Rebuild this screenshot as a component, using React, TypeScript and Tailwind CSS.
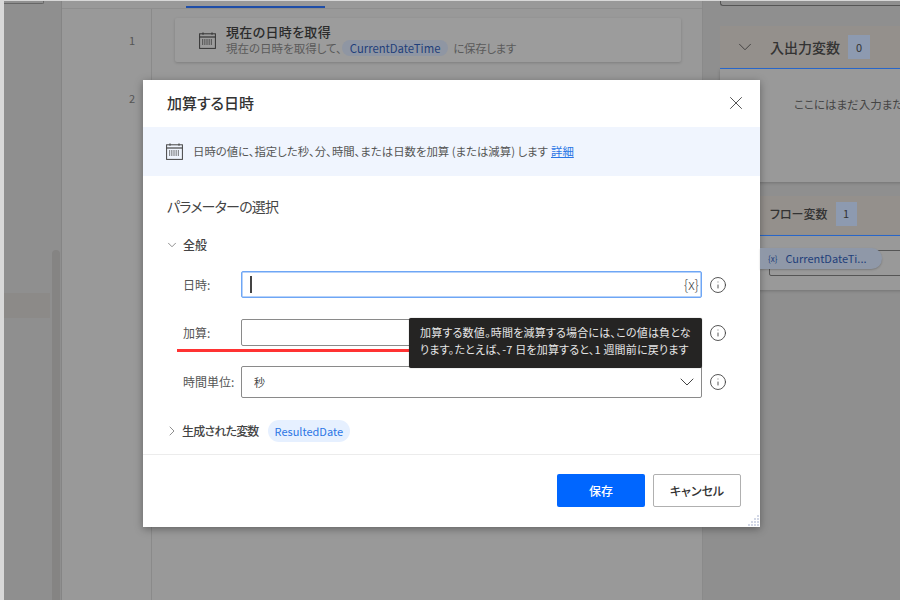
import { ChevronDown, ChevronRight, Info, X } from "lucide-react";

const FONT = "font-['Noto_Sans_CJK_JP','Noto_Sans',sans-serif] [font-feature-settings:'palt']";

function CalendarIcon({ className }: { className?: string }) {
  const dots = [];
  for (let row = 0; row < 3; row++) {
    for (let col = 0; col < 5; col++) {
      dots.push(<rect key={`${row}-${col}`} x={3 + col * 2.2} y={7.4 + row * 2} width="1.2" height="1.2" />);
    }
  }
  return (
    <svg viewBox="0 0 17 17" className={className} fill="none">
      <rect x="0.6" y="1.8" width="15.8" height="14.6" stroke="currentColor" strokeWidth="1" />
      <path d="M0.6 5h15.8" stroke="currentColor" strokeWidth="1.2" />
      <path d="M4 0.4v2.4M13 0.4v2.4" stroke="currentColor" strokeWidth="1" />
      <g fill="currentColor">{dots}</g>
    </svg>
  );
}

function ResizeGrip() {
  const cells = [
    [10, 0], [10, 3], [7, 3], [10, 6], [7, 6], [4, 6], [10, 9], [7, 9], [4, 9], [1, 9],
  ];
  return (
    <svg viewBox="0 0 12 11" className="absolute right-[1px] bottom-[1px] h-[11px] w-[12px]">
      {cells.map(([x, y]) => (
        <rect key={`${x}-${y}`} x={x} y={y} width="2" height="2" fill="#d3d8e6" />
      ))}
    </svg>
  );
}

function InfoButton({ className = "" }: { className?: string }) {
  return (
    <span className={`ml-[7px] flex w-[18px] shrink-0 justify-center text-[#444] ${className}`}>
      <Info size={18} strokeWidth={1.2} />
    </span>
  );
}

function FieldLabel({ children }: { children: string }) {
  return <span className="w-[98px] shrink-0 pl-[40px] text-[12px] text-[#555]">{children}</span>;
}

function LeftPanel() {
  return (
    <div className="flex w-[58px] shrink-0 flex-col border-r border-[#858585] bg-[#8f8f8f]">
      <div className="h-[3px] w-[40px] rounded-br-[2px] border-r border-b border-[#666]" />
      <div className="mt-[289px] flex grow">
        <div className="h-[25px] w-[46px] bg-[#8c8a88]" />
        <div className="-mt-[43px] ml-[2px] w-[8px] rounded-t-[4px] bg-[#858483]" />
      </div>
    </div>
  );
}

function CenterPanel() {
  return (
    <div className="flex w-[641px] shrink-0 flex-col border-r border-[#8a8a8a] bg-[#999]">
      <div className="h-[8px] border-b border-[#8e8e8e] bg-[#999] pl-[124px]">
        <div className="mt-[5px] h-[2px] w-[139px] bg-[#1f4ea8]" />
      </div>
      <div className="flex grow">
        <div className="w-[90px] shrink-0 border-r border-[#8a8a8a] text-right text-[11px] text-[#555]">
          <div className="mt-[23px] pr-[16px]">1</div>
          <div className="mt-[41px] pr-[16px]">2</div>
        </div>
        <div className="grow pl-[23px]">
          <div className="mt-[9px] flex h-[44px] w-[506px] items-center rounded-[2px] bg-[#9c9c9c] pl-[24px] shadow-[0_1px_3px_rgba(0,0,0,0.18)]">
            <CalendarIcon className="h-[17px] w-[17px] text-[#333]" />
            <div className="ml-[10px] -mt-[2px]">
              <div className="text-[13px] leading-[17px] font-medium tracking-[0.3px] text-[#2b2b2b]">現在の日時を取得</div>
              <div className="flex items-center text-[11.5px] leading-[16px] text-[#5a5a5a]">
                現在の日時を取得して、
                <span className="rounded-full bg-[#8f96a3] px-[8px] text-[11.3px] text-[#1f3f7a]">CurrentDateTime</span>
                <span className="ml-[5px] tracking-[-0.4px]">に保存します</span>
              </div>
            </div>
          </div>
        </div>
      </div>
    </div>
  );
}

function RightPanel() {
  return (
    <div className="grow bg-[#8f8f8f] pl-[17px]">
      <div className="h-[5px] rounded-bl-[3px] border-b border-l border-[#555]" />
      <div className="mt-[20px] flex h-[43px] items-center border-b border-[#2a6ad0] bg-[#94908c] pl-[14px] text-[#333]">
        <ChevronDown size={22} strokeWidth={0.9} />
        <span className="ml-[14px] text-[14px] font-medium">入出力変数</span>
        <span className="ml-[8px] flex h-[24px] w-[22px] items-center justify-center bg-[#8d9ab0] text-[11px]">0</span>
      </div>
      <div className="h-[113px] bg-[#999] pt-[27px] pl-[74px] text-[11.5px] whitespace-nowrap text-[#444] shadow-[0_1px_3px_rgba(0,0,0,0.2)]">
        ここにはまだ入力または
      </div>
      <div className="mt-[14px] flex h-[40px] items-center border-b border-[#2a6ad0] bg-[#94908c] pb-[4px] pl-[50px] text-[#333]">
        <span className="text-[12px] font-medium">フロー変数</span>
        <span className="ml-[8px] flex h-[24px] w-[21px] items-center justify-center bg-[#8d9ab0] text-[11px]">1</span>
      </div>
      <div className="h-[54px] bg-[#999] pt-[14px] pr-[1px] pl-[49px] shadow-[0_1px_3px_rgba(0,0,0,0.2)]">
        <div className="h-[26px] rounded-[2px] border border-[#555] bg-[#999]" />
      </div>
    </div>
  );
}

function Dialog() {
  return (
    <div className="absolute top-[80px] left-[143px] h-[447px] w-[617px] bg-white text-[#333] shadow-[0_2px_8px_rgba(0,0,0,0.35)]">
      <div className="flex h-[47px] items-center justify-between pr-[13px] pl-[24px]">
        <span className="text-[15px] font-medium">加算する日時</span>
        <X size={22} strokeWidth={1} className="-mt-[2px] text-[#444]" />
      </div>
      <div className="flex h-[49px] items-center bg-[#f0f5fe] pl-[23px] text-[11.4px] text-[#555]">
        <CalendarIcon className="h-[17px] w-[17px] text-[#444]" />
        <span className="ml-[10px]">日時の値に、指定した秒、分、時間、または日数を加算 (または減算) します</span>
        <span className="ml-[3px] text-[#2b76e5] underline">詳細</span>
      </div>
      <div className="mt-[20px] pl-[24px] text-[14px] leading-[20px] tracking-[-0.8px] text-[#444]">パラメーターの選択</div>
      <div className="mt-[20px] flex items-center pl-[22px]">
        <ChevronDown size={14} strokeWidth={1.25} className="text-[#666]" />
        <span className="ml-[4px] text-[12px] font-medium text-[#444]">全般</span>
      </div>
      <div className="mt-[17px] flex h-[27px] items-center">
        <FieldLabel>日時:</FieldLabel>
        <div className="flex h-full w-[461px] items-center justify-between rounded-[2px] border border-[#6ea6f5] pr-[2px] pl-[8px] shadow-[inset_0_0_0_0.5px_#6ea6f5]">
          <span className="h-[17px] w-[1.5px] bg-[#444]" />
          <span className="text-[14px] font-light text-[#444]">{"{x}"}</span>
        </div>
        <InfoButton className="mt-[1px]" />
      </div>
      <div className="relative mt-[21px] flex h-[27px] items-center">
        <FieldLabel>加算:</FieldLabel>
        <div className="h-full w-[461px] rounded-[2px] border border-[#8a8a8a]" />
        <InfoButton className="mt-[1px]" />
        <div className="absolute top-[30px] left-[34px] h-[3px] w-[232px] bg-[#ff3333]" />
        <div className="absolute top-[-1px] left-[266px] h-[50px] w-[293px] rounded-[2px] bg-[#252423] pt-[6px] pl-[11px] text-[11px] leading-[17px] tracking-[0.2px] whitespace-nowrap text-[#e6e6e6] shadow-[0_0_1px_rgba(0,0,0,0.6)]">
          <div>加算する数値。時間を減算する場合には、この値は負とな</div>
          <div>ります。たとえば、-7 日を加算すると、1 週間前に戻ります</div>
        </div>
      </div>
      <div className="mt-[20px] flex h-[32px] items-center">
        <FieldLabel>時間単位:</FieldLabel>
        <div className="flex h-full w-[461px] items-center justify-between rounded-[2px] border border-[#8a8a8a] pr-[2px] pl-[12px]">
          <span className="text-[11px] text-[#444]">秒</span>
          <ChevronDown size={24} strokeWidth={1} className="text-[#444]" />
        </div>
        <InfoButton className="-mt-[1px]" />
      </div>
      <div className="mt-[22px] flex items-center pl-[21px]">
        <ChevronRight size={16} strokeWidth={1.1} className="text-[#666]" />
        <span className="ml-[2px] text-[12px] font-medium tracking-[-0.8px] text-[#444]">生成された変数</span>
        <span className="ml-[9px] flex h-[22px] items-center rounded-full bg-[#e6f0ff] px-[7px] text-[11px] text-[#2b76e5]">
          ResultedDate
        </span>
      </div>
      <div className="mt-[12px] border-t border-[#ececec]" />
      <div className="mt-[19px] flex justify-end gap-[8px] pr-[19px]">
        <button className="h-[33px] w-[88px] rounded-[2px] bg-[#0066ff] text-[12px] font-medium text-white">保存</button>
        <button className="h-[33px] w-[88px] rounded-[2px] border-[1.5px] border-[#b0b0b0] bg-white text-[12px] font-medium text-[#333]">
          キャンセル
        </button>
      </div>
      <ResizeGrip />
    </div>
  );
}

export default function App() {
  return (
    <div className={`relative h-[600px] w-[900px] overflow-hidden bg-[#d8d8d8] pt-[1px] pl-[4px] ${FONT}`}>
      <div className="flex h-full">
        <LeftPanel />
        <CenterPanel />
        <RightPanel />
      </div>
      <Dialog />
      <div className="absolute top-[248px] left-[760px] flex h-[21px] w-[122px] items-center rounded-r-full bg-[#8f98a8] pl-[8px] text-[11px] text-[#1f3f7a] shadow-[0_1px_2px_rgba(0,0,0,0.2)]">
        <span className="text-[8px]">{"{x}"}</span>
        <span className="ml-[8px]">CurrentDateTi...</span>
      </div>
    </div>
  );
}
